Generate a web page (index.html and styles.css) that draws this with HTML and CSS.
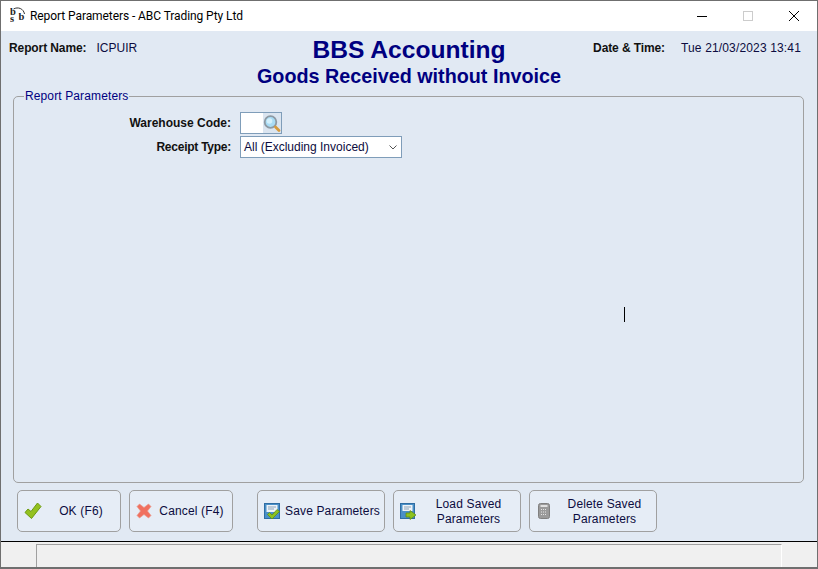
FILE: index.html
```html
<!DOCTYPE html>
<html lang="en">
<head>
    <meta charset="UTF-8">
    <title>Report Parameters - ABC Trading Pty Ltd</title>
    <link rel="stylesheet" href="styles.css">
</head>
<body>
    <div class="window">
        <!-- Title bar -->
        <div class="titlebar">
            <svg class="logo" width="17" height="18" viewBox="0 0 17 18">
                <path d="M3.500 2C8 -.5 13.500 1.500 14.500 7" stroke="#333" fill="none"/>
                <text class="logo-text"><tspan x="0" y="8">b</tspan><tspan x="0" y="14.500">s</tspan><tspan x="8.500" y="13">b</tspan></text>
            </svg>
            <span class="title-text">Report Parameters - ABC Trading Pty Ltd</span>
            <div class="win-buttons">
                <span class="win-btn"><svg width="12" height="12" viewBox="0 0 12 12"><path d="M1 6.500h10" stroke="#000" fill="none"/></svg></span>
                <span class="win-btn"><svg width="12" height="12" viewBox="0 0 12 12"><rect x="1.500" y="1.500" width="9" height="9" stroke="#cccccc" fill="none"/></svg></span>
                <span class="win-btn"><svg width="12" height="12" viewBox="0 0 12 12"><path d="M1 1l10 10M11 1L1 11" stroke="#000" fill="none"/></svg></span>
            </div>
        </div>

        <div class="content">
            <div class="header">
                <div class="info info-left"><b>Report Name:</b><span>ICPUIR</span></div>
                <div class="heading">
                    <div class="heading-main">BBS Accounting</div>
                    <div class="heading-sub">Goods Received without Invoice</div>
                </div>
                <div class="info info-right"><b>Date &amp; Time:</b><span>Tue 21/03/2023 13:41</span></div>
            </div>

            <fieldset class="panel">
                <legend>Report Parameters</legend>
                <div class="form-row">
                    <label>Warehouse Code:</label>
                    <div class="lookup">
                        <span class="lookup-input"></span>
                        <span class="lookup-btn">
                            <svg width="18" height="19" viewBox="0 0 18 19">
                                <circle cx="7.500" cy="8" r="5.800" fill="#a9dcf5" stroke="#8d99a3" stroke-width="1.800"/>
                                <circle cx="6.500" cy="7" r="2.800" fill="#d4f0fc"/>
                                <path d="M12.500 13l3.500 3.500" stroke="#d69a3c" stroke-width="2.800" stroke-linecap="round"/>
                            </svg>
                        </span>
                    </div>
                </div>
                <div class="form-row">
                    <label class="label-tight">Receipt Type:</label>
                    <div class="combo">
                        <span>All (Excluding Invoiced)</span>
                        <svg width="8" height="5" viewBox="0 0 8 5"><path d="M.5 .5L4 4 7.500 .5" stroke="#555" fill="none"/></svg>
                    </div>
                </div>
                <span class="cursor"></span>
            </fieldset>

            <div class="buttons">
                <div class="btn btn-ok">
                    <svg width="18" height="18" viewBox="0 0 18 18"><path d="M1 10.500L4 7l3 2.500L13.500 1 17 4.500 7.500 16.500z" fill="#94c11f" stroke="#6c9a10" stroke-linejoin="round"/></svg>
                    <span class="btn-text">OK (F6)</span>
                </div>
                <div class="btn btn-cancel">
                    <svg width="16" height="16" viewBox="0 0 16 16"><path d="M3.500 1L8 4.500 12.500 1 15 3.500 11.500 8 15 12.500 12.500 15 8 11.500 3.500 15 1 12.500 4.500 8 1 3.500z" fill="#f0705f" stroke="#e89a8c" stroke-width=".7" stroke-linejoin="round"/></svg>
                    <span class="btn-text">Cancel (F4)</span>
                </div>
                <div class="btn btn-save">
                    <svg width="17" height="17" viewBox="0 0 17 17">
                        <rect x=".5" y=".5" width="15" height="15" fill="#4a90c8" stroke="#2f6da3"/>
                        <rect x="2.500" y="2" width="11" height="7" fill="#eef3f8"/>
                        <path d="M4 4h8M4 6h6" stroke="#8ca3b8"/>
                        <path d="M3.500 11.500l2-2 2.500 2.500 5-5.500 2.500 2L8 16z" fill="#8cc21f" stroke="#5f8a0c" stroke-width=".7"/>
                    </svg>
                    <span class="btn-text">Save Parameters</span>
                </div>
                <div class="btn btn-load">
                    <svg width="17" height="17" viewBox="0 0 17 17">
                        <rect x=".5" y=".5" width="14" height="15" fill="#4a90c8" stroke="#2f6da3"/>
                        <rect x="2.500" y="2" width="10" height="6" fill="#eef3f8"/>
                        <path d="M4 4h7M4 6h5" stroke="#8ca3b8"/>
                        <path d="M6 10h4V7.500l6 4.500-6 4.500V14H6z" fill="#8cc21f" stroke="#5f8a0c" stroke-width=".7"/>
                    </svg>
                    <span class="btn-text">Load Saved<br>Parameters</span>
                </div>
                <div class="btn btn-delete">
                    <svg width="13" height="17" viewBox="0 0 13 17">
                        <rect x=".5" y=".5" width="11" height="15" rx="2" fill="#9a9a9a" stroke="#808080"/>
                        <rect x="2.500" y="2" width="7" height="2" fill="#e0e0e0"/>
                        <path d="M3 6.500h6M3 9h6M3 11.500h6" stroke="#e4e4e4" stroke-dasharray="1 1"/>
                    </svg>
                    <span class="btn-text">Delete Saved<br>Parameters</span>
                </div>
            </div>
        </div>

        <div class="statusbar">
            <div class="status-left"></div>
            <div class="status-main"></div>
        </div>
    </div>
</body>
</html>
```

FILE: styles.css
```css
html, body {
    margin: 0;
    height: 100%;
}
body {
    font-family: "Liberation Sans", Arial, sans-serif;
    font-size: 12px;
    color: #000000;
    background: #6e6e6e;
    overflow: hidden;
}
.window {
    box-sizing: border-box;
    width: 818px;
    height: 569px;
    border: 1px solid #6f6f6f;
    border-bottom-width: 2px;
    display: flex;
    flex-direction: column;
}

/* title bar */
.titlebar {
    height: 30px;
    background: #ffffff;
    display: flex;
    align-items: center;
    flex-shrink: 0;
}
.logo {
    margin-left: 9px;
    margin-right: 3px;
    flex-shrink: 0;
}
.logo-text {
    font-family: "Liberation Serif", serif;
    font-weight: bold;
    font-size: 10.5px;
    fill: #222222;
}
.title-text {
    font-family: Roboto, "Liberation Sans", sans-serif;
    font-size: 12px;
    letter-spacing: -.08px;
    color: #000000;
}
.win-buttons {
    margin-left: auto;
    display: flex;
}
.win-btn {
    width: 46px;
    height: 30px;
    display: flex;
    align-items: center;
    justify-content: center;
}

.content {
    flex: 1;
    background: #e1e9f3;
    display: flex;
    flex-direction: column;
    min-height: 0;
}

/* header */
.header {
    height: 58px;
    position: relative;
    flex-shrink: 0;
}
.info {
    position: absolute;
    top: 10px;
    display: flex;
    line-height: 14px;
}
.info b {
    color: #111111;
}
.info span {
    color: #0c0c40;
}
.info-left {
    left: 8px;
}
.info-left b {
    letter-spacing: -.1px;
    margin-right: 10px;
}
.info-right {
    right: 16px;
}
.info-right b {
    letter-spacing: -.1px;
    margin-right: 16px;
}
.info-right span {
    letter-spacing: .15px;
}
.heading {
    text-align: center;
    color: #000080;
    font-weight: bold;
    padding-top: 4px;
}
.heading-main {
    font-size: 24.6px;
    line-height: 29px;
}
.heading-sub {
    font-size: 19.75px;
    line-height: 25px;
}

/* parameters panel */
.panel {
    position: relative;
    box-sizing: border-box;
    height: 394px;
    margin: 0 13px 0 12px;
    padding: 0;
    border: 1px solid #a0a0a0;
    border-radius: 5px;
    flex-shrink: 0;
}
.panel legend {
    color: #000080;
    padding: 0 1px;
    margin-left: 10px;
    line-height: 14px;
    letter-spacing: .12px;
}
.form-row {
    display: flex;
    align-items: center;
    height: 24px;
}
.form-row:first-of-type {
    margin-top: 8px;
}
.form-row label {
    width: 217px;
    text-align: right;
    font-weight: bold;
    color: #111111;
    margin-right: 9px;
}
.form-row .label-tight {
    letter-spacing: -.25px;
}
.lookup {
    display: flex;
    height: 22px;
    width: 42px;
    box-sizing: border-box;
    border: 1px solid #7f9db9;
    background: #ffffff;
}
.lookup-input {
    width: 24px;
}
.lookup-btn {
    flex: 1;
    background: #dbe5f0;
    display: flex;
    align-items: center;
    justify-content: center;
}
.combo {
    display: flex;
    align-items: center;
    justify-content: space-between;
    width: 162px;
    height: 22px;
    box-sizing: border-box;
    border: 1px solid #7f9db9;
    background: #ffffff;
    padding: 0 4px 0 3px;
    color: #0c0c40;
}
.cursor {
    position: absolute;
    left: 610px;
    top: 204px;
    width: 1px;
    height: 15px;
    background: #000000;
}

/* buttons */
.buttons {
    display: flex;
    padding: 7px 0 0 16px;
    gap: 8px;
}
.btn {
    box-sizing: border-box;
    height: 42px;
    border: 1px solid #a0a0a0;
    border-radius: 5px;
    background: #e6edf6;
    display: flex;
    align-items: center;
    color: #0c0c40;
    line-height: 15px;
    letter-spacing: .15px;
    flex-shrink: 0;
}
.btn svg {
    flex-shrink: 0;
}
.btn-text {
    flex: 1;
    text-align: center;
}
.btn-load .btn-text, .btn-delete .btn-text {
    padding-top: 2px;
}
.btn-ok {
    width: 104px;
    padding: 0 0 0 6px;
}
.btn-cancel {
    width: 104px;
    padding: 0 1px 0 6px;
}
.btn-save {
    width: 128px;
    margin-left: 16px;
    padding: 0 0 0 6px;
}
.btn-load {
    width: 128px;
    padding: 0 0 0 6px;
}
.btn-delete {
    width: 128px;
    padding: 0 0 0 8px;
}
.btn-delete .btn-text {
    margin-left: 2px;
}

/* status bar */
.statusbar {
    height: 26px;
    flex-shrink: 0;
    box-sizing: border-box;
    border-top: 1px solid #000000;
    background: #f0f0f0;
    display: flex;
    padding-top: 2px;
}
.status-left {
    width: 35px;
    border-right: 1px solid #a0a0a0;
}
.status-main {
    width: 744px;
    border-top: 1px solid #a0a0a0;
    border-right: 1px solid #ffffff;
}
```
